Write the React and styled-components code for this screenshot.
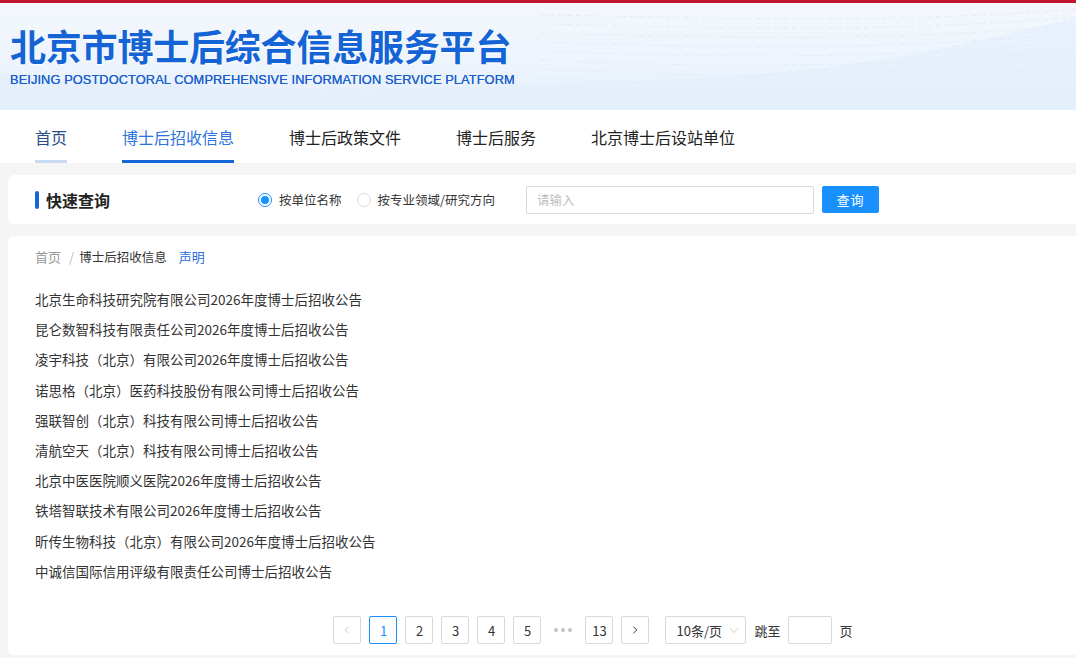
import React from 'react';
import styled, { createGlobalStyle } from 'styled-components';

const GlobalStyle = createGlobalStyle`
  body {
    margin: 0;
    background: #f5f5f5;
    font-family: "Noto Sans CJK SC", "Noto Sans", sans-serif;
    color: #333;
    overflow: hidden;
  }
`;

const navItems = ['首页', '博士后招收信息', '博士后政策文件', '博士后服务', '北京博士后设站单位'];

const notices = [
  '北京生命科技研究院有限公司2026年度博士后招收公告',
  '昆仑数智科技有限责任公司2026年度博士后招收公告',
  '凌宇科技（北京）有限公司2026年度博士后招收公告',
  '诺思格（北京）医药科技股份有限公司博士后招收公告',
  '强联智创（北京）科技有限公司博士后招收公告',
  '清航空天（北京）科技有限公司博士后招收公告',
  '北京中医医院顺义医院2026年度博士后招收公告',
  '铁塔智联技术有限公司2026年度博士后招收公告',
  '昕传生物科技（北京）有限公司2026年度博士后招收公告',
  '中诚信国际信用评级有限责任公司博士后招收公告',
];

const Header = styled.header`
  position: relative;
  height: 107px;
  border-top: 3px solid #c0172e;
  background: linear-gradient(180deg, #f4f8fd 0%, #edf4fc 55%, #e4effb 100%);
  overflow: hidden;
  padding-left: 10px;
  box-sizing: content-box;
`;

const HeaderArt = styled.svg`
  position: absolute;
  left: 0;
  top: 0;
  width: 100%;
  height: 100%;
`;

const HeaderText = styled.div`
  position: relative;
  display: flex;
  flex-direction: column;
`;

const Title = styled.h1`
  margin: 19px 0 0;
  font-size: 36px;
  line-height: 46px;
  font-weight: 700;
  color: #1464d6;
  letter-spacing: -0.2px;
  text-shadow: 0 0 2px #fff, 0 1px 2px #fff;
`;

const Subtitle = styled.div`
  margin-top: 4px;
  font-family: "Liberation Sans", Arial, sans-serif;
  font-size: 12.8px;
  line-height: 16px;
  color: #1c60cc;
  letter-spacing: 0.1px;
  text-shadow: 0 0 0.2px #1c60cc;
`;

const Nav = styled.nav`
  height: 53px;
  background: #fff;
  display: flex;
  gap: 55px;
  padding-left: 35px;
`;

const NavItem = styled.a`
  display: flex;
  align-items: center;
  height: 100%;
  box-sizing: border-box;
  padding-top: 3px;
  font-size: 16px;
  color: ${p => (p.$active ? '#2a74dc' : p.$home ? '#2a4d86' : '#222')};
  border-bottom: 3px solid ${p => (p.$active ? '#1566d6' : p.$home ? '#c9dbf2' : 'transparent')};
  cursor: pointer;
`;

const Main = styled.main`
  width: 1170px;
  margin-left: 8px;
  padding-top: 12px;
  display: flex;
  flex-direction: column;
  gap: 12px;
`;

const QueryCard = styled.section`
  height: 49px;
  background: #fff;
  border-radius: 6px;
  display: flex;
  align-items: center;
  padding-left: 27px;
`;

const QueryTitle = styled.h2`
  margin: 0;
  display: flex;
  align-items: center;
  gap: 7px;
  font-size: 16px;
  font-weight: 700;
  color: #222;
  &::before {
    content: '';
    width: 4px;
    height: 18px;
    border-radius: 2px;
    background: #1566d6;
  }
`;

const RadioGroup = styled.div`
  display: flex;
  align-items: center;
  margin-left: 148px;
  gap: 15px;
`;

const RadioLabel = styled.label`
  display: flex;
  align-items: center;
  gap: 7px;
  font-size: 12.5px;
  color: #333;
`;

const RadioDot = styled.span`
  width: 14px;
  height: 14px;
  border-radius: 50%;
  box-sizing: border-box;
  border: 1px solid ${p => (p.$checked ? '#1890ff' : '#d9d9d9')};
  display: flex;
  align-items: center;
  justify-content: center;
  &::after {
    content: '';
    width: 8px;
    height: 8px;
    border-radius: 50%;
    background: ${p => (p.$checked ? '#1890ff' : 'transparent')};
  }
`;

const SearchInput = styled.input`
  margin-left: 31px;
  width: 288px;
  height: 28px;
  box-sizing: border-box;
  border: 1px solid #d9d9d9;
  border-radius: 2px;
  padding: 0 10px;
  font-family: inherit;
  font-size: 12.5px;
  outline: none;
  &::placeholder {
    color: #bfbfbf;
  }
`;

const SearchButton = styled.button`
  margin-left: 8px;
  width: 57px;
  height: 27px;
  border: none;
  border-radius: 2px;
  background: #1890ff;
  color: #fff;
  font-family: inherit;
  font-size: 13px;
  letter-spacing: 1px;
`;

const ContentCard = styled.section`
  background: #fff;
  border-radius: 6px;
  padding: 11px 27px 11px;
  display: flex;
  flex-direction: column;
`;

const Breadcrumb = styled.div`
  display: flex;
  align-items: center;
  font-size: 13px;
  line-height: 20px;
`;

const Crumb = styled.span`
  color: ${p => (p.$current ? '#333' : '#999')};
  font-size: ${p => (p.$current ? '12.5px' : '13px')};
`;

const Sep = styled.span`
  color: #bbb;
  margin: 0 5px 0 8px;
`;

const Statement = styled.span`
  color: #2a6fdb;
  margin-left: 12px;
`;

const NoticeList = styled.ul`
  list-style: none;
  margin: 17px 0 0;
  padding: 0;
`;

const Notice = styled.li`
  font-size: 13.5px;
  line-height: 30.2px;
  color: #333;
`;

const Pager = styled.div`
  margin-top: 30px;
  display: flex;
  align-items: center;
  justify-content: center;
  font-size: 13px;
`;

const PageBtn = styled.span`
  width: 28px;
  height: 28px;
  box-sizing: border-box;
  border: 1px solid ${p => (p.$active ? '#1890ff' : '#d9d9d9')};
  border-radius: 2px;
  display: flex;
  align-items: center;
  justify-content: center;
  color: ${p => (p.$active ? '#1890ff' : p.$disabled ? '#c8c8c8' : '#333')};
  margin-right: 8px;
`;

const Ellipsis = styled.span`
  width: 28px;
  margin-right: 8px;
  display: flex;
  justify-content: center;
  gap: 3px;
  &::before,
  &::after,
  & > i {
    content: '';
    width: 4px;
    height: 4px;
    border-radius: 50%;
    background: #c4c4c4;
  }
`;

const SizeSelect = styled.span`
  margin-left: 8px;
  width: 81px;
  height: 28px;
  box-sizing: border-box;
  border: 1px solid #d9d9d9;
  border-radius: 2px;
  display: flex;
  align-items: center;
  padding-left: 10px;
  gap: 6px;
  color: #333;
`;

const SelectArrow = styled.span`
  display: flex;
  color: #c8c8c8;
`;

const JumpText = styled.span`
  margin-left: ${p => (p.$tight ? '0' : '8px')};
  color: #333;
`;

const JumpInput = styled.span`
  margin: 0 8px 0 7px;
  width: 44px;
  height: 28px;
  box-sizing: border-box;
  border: 1px solid #d9d9d9;
  border-radius: 2px;
`;

const Chevron = ({ dir }) => {
  const d = {
    left: 'M9 3 L5 7 L9 11',
    right: 'M5 3 L9 7 L5 11',
    down: 'M2 5 L7 10 L12 5',
  }[dir];
  return (
    <svg width="12" height="12" viewBox="0 0 14 14" fill="none">
      <path d={d} stroke="currentColor" strokeWidth="1.1" />
    </svg>
  );
};

const App = () => (
  <>
    <GlobalStyle />
    <Header>
      <HeaderArt viewBox="0 0 1076 107" preserveAspectRatio="none">
        <path d="M0 70 C 250 95, 500 85, 700 75 S 1000 30, 1076 15 L1076 107 L0 107 Z" fill="#e2eefb" opacity="0.6" />
        {[0, 1, 2, 3, 4, 5, 6, 7].map(i => (
          <path
            key={i}
            d={`M540 ${12 + i * 9} C 700 ${14 + i * 10}, 880 ${22 + i * 9}, 1076 ${6 + i * 8}`}
            stroke="#dfeaf7"
            strokeWidth="1"
            strokeDasharray="5 4"
            fill="none"
            opacity="0.8"
          />
        ))}
      </HeaderArt>
      <HeaderText>
        <Title>北京市博士后综合信息服务平台</Title>
        <Subtitle>BEIJING POSTDOCTORAL COMPREHENSIVE INFORMATION SERVICE PLATFORM</Subtitle>
      </HeaderText>
    </Header>

    <Nav>
      {navItems.map((item, i) => (
        <NavItem key={item} $home={i === 0} $active={i === 1}>
          {item}
        </NavItem>
      ))}
    </Nav>

    <Main>
      <QueryCard>
        <QueryTitle>快速查询</QueryTitle>
        <RadioGroup>
          <RadioLabel>
            <RadioDot $checked />
            按单位名称
          </RadioLabel>
          <RadioLabel>
            <RadioDot />
            按专业领域/研究方向
          </RadioLabel>
        </RadioGroup>
        <SearchInput placeholder="请输入" />
        <SearchButton>查询</SearchButton>
      </QueryCard>

      <ContentCard>
        <Breadcrumb>
          <Crumb>首页</Crumb>
          <Sep>/</Sep>
          <Crumb $current>博士后招收信息</Crumb>
          <Statement>声明</Statement>
        </Breadcrumb>
        <NoticeList>
          {notices.map(n => (
            <Notice key={n}>{n}</Notice>
          ))}
        </NoticeList>
        <Pager>
          <PageBtn $disabled>
            <Chevron dir="left" />
          </PageBtn>
          {[1, 2, 3, 4, 5].map(n => (
            <PageBtn key={n} $active={n === 1}>
              {n}
            </PageBtn>
          ))}
          <Ellipsis>
            <i />
          </Ellipsis>
          <PageBtn>13</PageBtn>
          <PageBtn>
            <Chevron dir="right" />
          </PageBtn>
          <SizeSelect>
            10条/页
            <SelectArrow>
              <Chevron dir="down" />
            </SelectArrow>
          </SizeSelect>
          <JumpText>跳至</JumpText>
          <JumpInput />
          <JumpText $tight>页</JumpText>
        </Pager>
      </ContentCard>
    </Main>
  </>
);

export default App;
